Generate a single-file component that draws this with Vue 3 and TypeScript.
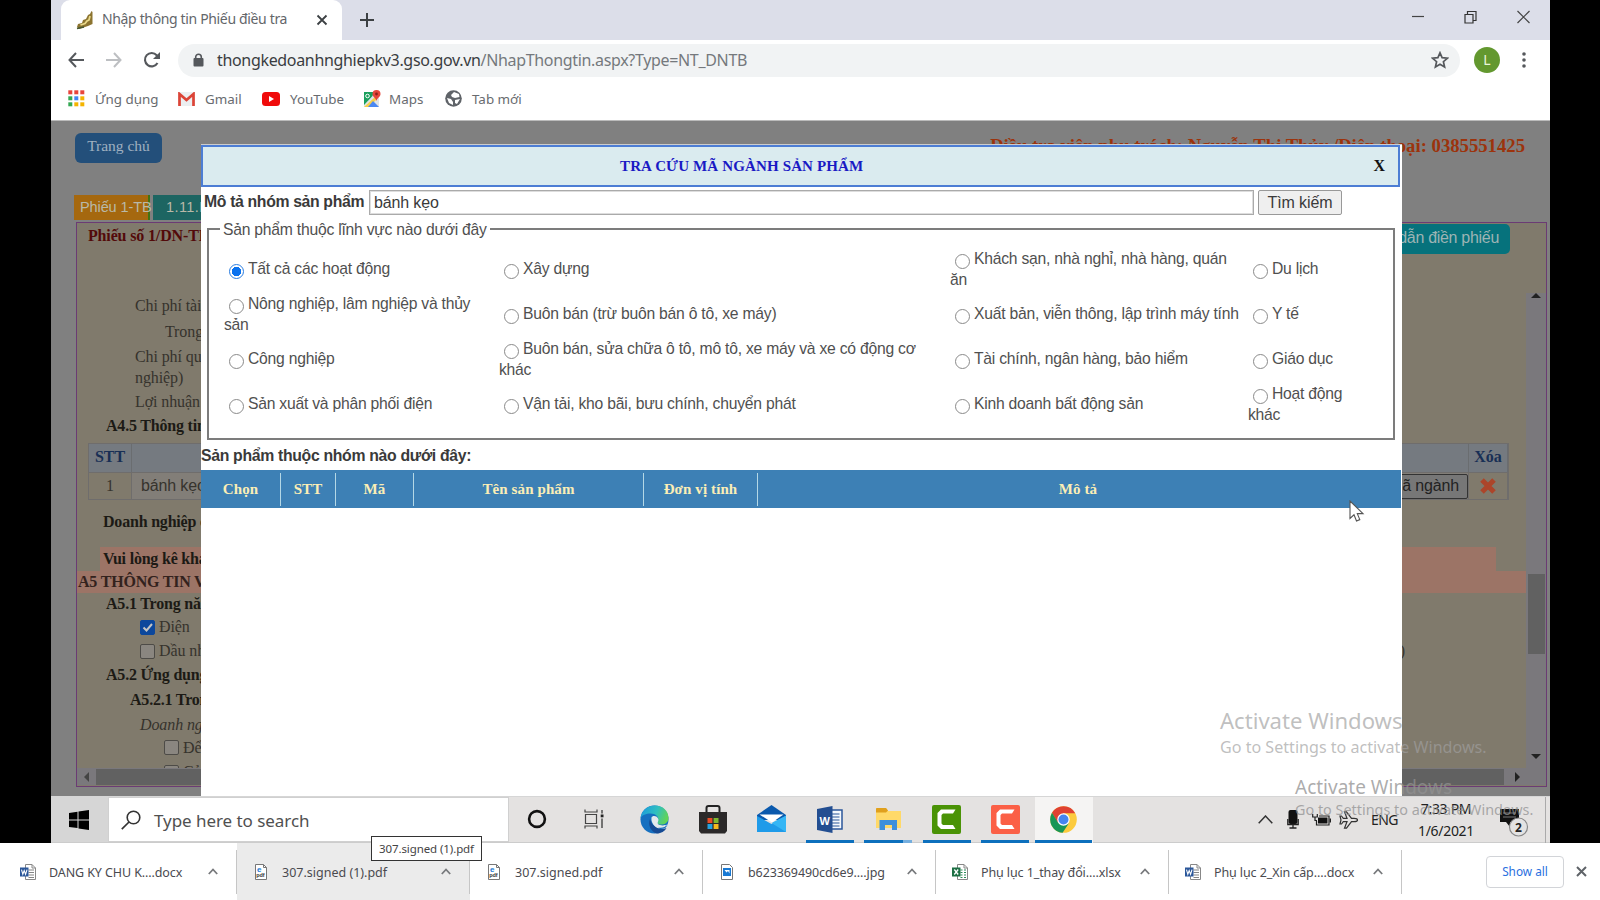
<script setup lang="ts">
interface Bookmark { label: string; icon: string; cls: string }
interface Download { name: string; kind: 'word' | 'pdf' | 'image' | 'excel'; active?: boolean; cls: string }
interface Option { lines: string[]; checked?: boolean }

const bookmarks: Bookmark[] = [
  { label: 'Ứng dụng', icon: 'apps', cls: 'bm-apps' },
  { label: 'Gmail', icon: 'gmail', cls: 'bm-gmail' },
  { label: 'YouTube', icon: 'youtube', cls: 'bm-youtube' },
  { label: 'Maps', icon: 'maps', cls: 'bm-maps' },
  { label: 'Tab mới', icon: 'globe', cls: 'bm-new' },
]

const appDots: string[] = ['#e8453c', '#e8453c', '#e8453c', '#34a853', '#4285f4', '#f4b400', '#34a853', '#f4b400', '#f4b400']

const options: Option[] = [
  { lines: ['Tất cả các hoạt động'], checked: true },
  { lines: ['Xây dựng'] },
  { lines: ['Khách sạn, nhà nghỉ, nhà hàng, quán', 'ăn'] },
  { lines: ['Du lịch'] },
  { lines: ['Nông nghiệp, lâm nghiệp và thủy', 'sản'] },
  { lines: ['Buôn bán (trừ buôn bán ô tô, xe máy)'] },
  { lines: ['Xuất bản, viễn thông, lập trình máy tính'] },
  { lines: ['Y tế'] },
  { lines: ['Công nghiệp'] },
  { lines: ['Buôn bán, sửa chữa ô tô, mô tô, xe máy và xe có động cơ', 'khác'] },
  { lines: ['Tài chính, ngân hàng, bảo hiểm'] },
  { lines: ['Giáo dục'] },
  { lines: ['Sản xuất và phân phối điện'] },
  { lines: ['Vận tải, kho bãi, bưu chính, chuyển phát'] },
  { lines: ['Kinh doanh bất động sản'] },
  { lines: ['Hoạt động', 'khác'] },
]

const columns: string[] = ['Chọn', 'STT', 'Mã', 'Tên sản phẩm', 'Đơn vị tính', 'Mô tả']

const downloads: Download[] = [
  { name: 'DANG KY CHU K....docx', kind: 'word', cls: 'd0' },
  { name: '307.signed (1).pdf', kind: 'pdf', active: true, cls: 'd1' },
  { name: '307.signed.pdf', kind: 'pdf', cls: 'd2' },
  { name: 'b623369490cd6e9....jpg', kind: 'image', cls: 'd3' },
  { name: 'Phụ lục 1_thay đổi....xlsx', kind: 'excel', cls: 'd4' },
  { name: 'Phụ lục 2_Xin cấp....docx', kind: 'word', cls: 'd5' },
]
</script>

<template>
  <div class="desktop">
    <div class="screen">
      <div class="tabstrip">
        <div class="tab">
          <svg class="fav" width="18" height="20" viewBox="0 0 18 20"><path d="M1 17 2 14 6 13 7 10 10 9 12 5 14 4 15.500 1 16.500 2 16.500 14 12 16 3 19Z" fill="#8c7430" /><path d="M4.500 15 9 13.500 11 11 13 10 14 6" stroke="#e9d98a" stroke-width="1.800" fill="none" /><path d="M1 18.500 8 17" stroke="#46562f" stroke-width="1.500" /></svg>
          <span class="tab-title">Nhập thông tin Phiếu điều tra</span>
          <svg width="12" height="12" viewBox="0 0 12 12"><path d="M1.500 1.500 10.500 10.500M10.500 1.500 1.500 10.500" stroke="#3c4043" stroke-width="1.800" /></svg>
        </div>
        <svg class="plus" width="14" height="14" viewBox="0 0 14 14"><path d="M7 0V14M0 7H14" stroke="#3c4043" stroke-width="2" /></svg>
        <div class="winctl">
          <svg width="12" height="14" viewBox="0 0 12 14"><path d="M0 6.500H12" stroke="#444" stroke-width="1.200" /></svg>
          <svg width="13" height="14" viewBox="0 0 13 14"><path d="M1 4.500H9V13H1ZM3.500 4.500V1.500H12V10.500H9" stroke="#333" fill="none" stroke-width="1.200" /></svg>
          <svg width="13" height="14" viewBox="0 0 13 14"><path d="M.5 1 12.500 13M12.500 1 .5 13" stroke="#444" stroke-width="1.200" /></svg>
        </div>
      </div>

      <div class="toolbar">
        <svg class="t-back" width="16" height="16" viewBox="0 0 16 16"><path d="M8 1 1.500 8 8 15M1.500 8H16" stroke="#55585c" fill="none" stroke-width="2" /></svg>
        <svg class="t-fwd" width="16" height="16" viewBox="0 0 16 16"><path d="M8 1 14.500 8 8 15M14.500 8H0" stroke="#bdbfc2" fill="none" stroke-width="2" /></svg>
        <svg class="t-reload" width="18" height="18" viewBox="0 0 18 18"><path d="M14.500 12A6.700 6.700 0 1 1 13.700 4.200L15.500 6" stroke="#55585c" fill="none" stroke-width="2.100" /><path d="M17 1V8H10Z" fill="#55585c" /></svg>
        <div class="omnibox">
          <svg width="11" height="14" viewBox="0 0 11 14"><path d="M2.700 6V4A2.800 2.800 0 0 1 8.300 4V6" stroke="#55585c" fill="none" stroke-width="1.600" /><rect x=".5" y="5" width="10" height="8.500" rx="1" fill="#55585c" /></svg>
          <span class="url"><b>thongkedoanhnghiepkv3.gso.gov.vn</b>/NhapThongtin.aspx?Type=NT_DNTB</span>
          <svg class="star" width="18" height="18" viewBox="0 0 18 18"><path d="M9 1.800 11.100 6.700 16.400 7.200 12.400 10.700 13.600 16 9 13.200 4.400 16 5.600 10.700 1.600 7.200 6.900 6.700Z" stroke="#55585c" fill="none" stroke-width="1.700" /></svg>
        </div>
        <span class="avatar">L</span>
        <svg class="dots" width="4" height="16" viewBox="0 0 4 16"><circle cx="2" cy="2" r="1.800" /><circle cx="2" cy="8" r="1.800" /><circle cx="2" cy="14" r="1.800" /></svg>
      </div>

      <div class="bookmarks">
        <div v-for="b in bookmarks" :key="b.label" class="bm" :class="b.cls">
          <svg v-if="b.icon === 'apps'" width="17" height="17" viewBox="0 0 17 17"><rect v-for="(c, i) in appDots" :key="i" :x="(i % 3) * 6 + 0.3" :y="Math.floor(i / 3) * 6 + 0.3" width="4" height="4" :fill="c" /></svg>
          <svg v-else-if="b.icon === 'gmail'" width="17" height="14" viewBox="0 0 17 14"><rect width="17" height="14" rx="1.500" fill="#eceff1" /><path d="M1.500 14V2L8.500 8 15.500 2V14" stroke="#dc4437" fill="none" stroke-width="2.700" /></svg>
          <svg v-else-if="b.icon === 'youtube'" width="18" height="14" viewBox="0 0 18 14"><rect width="18" height="14" rx="3.500" fill="#f00b0b" /><path d="M7 4 12 7 7 10Z" fill="#fff" /></svg>
          <svg v-else-if="b.icon === 'maps'" width="18" height="18" viewBox="0 0 18 18"><path d="M1 2H11L16 8V17H1Z" fill="#dfe3e6" /><path d="M1 2H11L9.500 6 1 15Z" fill="#1a9f5c" /><path d="M1 17 12 7 14 9 6 17Z" fill="#f8cf46" /><path d="M5 17 10 11 16 17Z" fill="#4b88f2" /><path d="M13.500 0A4 4 0 0 1 17.500 4C17.500 7 14 8 13.500 11 13 8 9.500 7 9.500 4A4 4 0 0 1 13.500 0Z" fill="#e5453a" /><circle cx="13.500" cy="4" r="1.400" fill="#8c2119" /><circle cx="4.500" cy="6" r="1.800" stroke="#fff" fill="none" /></svg>
          <svg v-else width="17" height="17" viewBox="0 0 17 17"><circle cx="8.500" cy="8.500" r="8.300" fill="#5f6368" /><path d="M2 8 6 9 8 12 8 15 4 13ZM9 2 14 4 14.500 7 10 8 7 7 6 5ZM10 10 15 9 12 14 10 13Z" fill="#fff" /></svg>
          <span>{{ b.label }}</span>
        </div>
      </div>

      <div class="page">
        <div class="pagehead">
          <span class="home">Trang chủ</span>
          <span class="investigator">Điều tra viên phụ trách: Nguyễn Thị Thủy /Điện thoại: 0385551425</span>
        </div>
        <div class="formtabs"><span class="ft1">Phiếu 1-TB</span><span class="ft2">1.11.N</span></div>
        <div class="form">
          <div class="formtop"><span class="formname">Phiếu số 1/DN-TB</span><span class="guide">Hướng dẫn điền phiếu</span></div>
          <div class="pane">
            <div class="content">
              <p class="h26 in2">Chi phí tài chính</p>
              <p class="h26 in3">Trong đó</p>
              <p class="h23 in2">Chi phí quản lý</p>
              <p class="h20 in2">nghiệp)</p>
              <p class="h27 in2">Lợi nhuận</p>
              <p class="h21 in1 strong">A4.5 Thông tin</p>
              <div class="grid">
                <span class="gh">STT</span><span class="gh"></span><span class="gh">Xóa</span>
                <span class="gc">1</span>
                <span class="gc prod"><i>bánh kẹo</i><em>Mã ngành</em></span>
                <span class="gc"><svg width="18" height="18" viewBox="0 0 18 18"><path d="M3 3 15 15M15 3 3 15" stroke="#ac452a" stroke-width="5" /></svg></span>
              </div>
              <p class="h44 in0 strong">Doanh nghiệp có</p>
              <p class="band1 strong">Vui lòng kê khai</p>
              <p class="band2 strong">A5 THÔNG TIN VỀ</p>
              <p class="h22 in1 strong">A5.1 Trong năm</p>
              <p class="h24 in4"><span class="cb on"><svg width="13" height="13" viewBox="0 0 13 13"><path d="M2.500 6.500 5.500 9.500 11 3" stroke="#c4c4c4" stroke-width="2" fill="none" /></svg></span>Điện</p>
              <p class="h24 in4"><span class="cb"></span>Dầu nhờn<span class="paren">)</span></p>
              <p class="h24 in1 strong">A5.2 Ứng dụng</p>
              <p class="h25 in5 strong">A5.2.1 Trong</p>
              <p class="h25 in4 ital">Doanh nghiệp</p>
              <p class="h21 in6"><span class="cb"></span>Để</p>
              <p class="h28 in6"><span class="cb"></span>Cả</p>
            </div>
            <div class="vbar"><i class="up"></i><b></b><i class="down"></i></div>
          </div>
          <div class="hbar"><i class="left"></i><b></b><i class="right"></i></div>
        </div>

        <div class="modal">
          <div class="mhead"><span class="mtitle">TRA CỨU MÃ NGÀNH SẢN PHẨM</span><span class="mclose">X</span></div>
          <div class="search"><span class="slabel">Mô tả nhóm sản phẩm</span><span class="sinput">bánh kẹo</span><span class="sbtn">Tìm kiếm</span></div>
          <fieldset>
            <legend>Sản phẩm thuộc lĩnh vực nào dưới đây</legend>
            <div class="opts">
              <div v-for="(o, i) in options" :key="i" class="opt">
                <div class="first"><span class="radio" :class="{ checked: o.checked }"></span><span>{{ o.lines[0] }}</span></div>
                <div v-if="o.lines[1]" class="second">{{ o.lines[1] }}</div>
              </div>
            </div>
          </fieldset>
          <div class="group">Sản phẩm thuộc nhóm nào dưới đây:</div>
          <div class="thead"><span v-for="c in columns" :key="c">{{ c }}</span></div>
        </div>
      </div>

      <div class="taskbar">
        <div class="start"><svg width="20" height="20" viewBox="0 0 20 20"><path d="M0 3 8.500 1.800V9.400H0ZM9.500 1.600 20 0V9.400H9.500ZM0 10.400H8.500V18L0 16.900ZM9.500 10.400H20V20L9.500 18.400Z" /></svg></div>
        <div class="find"><svg width="20" height="20" viewBox="0 0 20 20"><circle cx="12.500" cy="7.500" r="6.300" stroke="#333" fill="none" stroke-width="1.600" /><path d="M8 12 .8 19.200" stroke="#333" stroke-width="1.700" /></svg><span>Type here to search</span></div>
        <div class="apps">
          <div class="app"><svg width="20" height="20" viewBox="0 0 20 20"><circle cx="10" cy="10" r="7.900" stroke="#111" stroke-width="2.600" fill="none" /></svg></div>
          <div class="app taskview"><svg width="20" height="20" viewBox="0 0 20 20"><path d="M1 .5V3H13V.5M1 19.500V17H13V19.500M1.500 5.500H12.500V14.500H1.500Z" stroke="#444" stroke-width="1.200" fill="none" /><path d="M18 1V4.500M18 9.500V19" stroke="#444" stroke-width="1.400" /><rect x="16.700" y="5.500" width="2.800" height="2.800" fill="#222" /></svg></div>
          <div class="app"><svg width="29" height="29" viewBox="0 0 29 29"><defs><linearGradient id="eg" x1="0" x2="1" y1=".2" y2=".5"><stop offset="0" stop-color="#1c9bdd" /><stop offset=".55" stop-color="#30bfc0" /><stop offset="1" stop-color="#62d455" /></linearGradient></defs><circle cx="14.500" cy="14.500" r="14" fill="#1670c0" /><path d="M.6 13C1.500 5 8 .5 15 .5 23 .5 28.500 6 28.500 13 28.500 18 24 20 20 19.500 17 19 17 17.500 18 16 19.500 12 15.500 8.500 10.500 8.500 6 8.500 2 10 .6 13Z" fill="url(#eg)" /><path d="M13 14C12 20 16 24 21 24 24 24 26 23 28 20.500L29 23 27 27 20 24.500Z" fill="#e4e2e1" /><path d="M11.500 12.500C11 17 13 20.500 18 22.500 22 23.500 25 22 28 19.500 25 20.500 20 21 18 19 17 17.500 18.500 16.500 18.500 14.500 17.500 10.500 12.500 10 11.500 12.500Z" fill="#e4e9ec" /><path d="M10 14C7.500 20 11 27 17 28.500 21 28.500 25 26 26.500 23 20 26 12 22 10 14Z" fill="#164b94" /></svg></div>
          <div class="app"><svg width="28" height="29" viewBox="0 0 28 29"><path d="M7.500 8V3A2 2 0 0 1 9.500 1H18.500A2 2 0 0 1 20.500 3V8" stroke="#222" stroke-width="2" fill="none" /><path d="M0 7H28V26L26 28.500H2L0 26Z" fill="#2b2929" /><path d="M8.500 13H13.400V18H8.500Z" fill="#e94d26" /><path d="M14.600 13H19.500V18H14.600Z" fill="#7cb82f" /><path d="M8.500 19H13.400V24H8.500Z" fill="#25a3e0" /><path d="M14.600 19H19.500V24H14.600Z" fill="#f5b91e" /></svg></div>
          <div class="app"><svg width="29" height="28" viewBox="0 0 29 28"><path d="M0 10 14.500 0 29 10V15H0Z" fill="#0a59ad" /><path d="M0 11 14.500 19 29 11V27H0Z" fill="#1f9be9" /><path d="M14.500 18 29 10.500V27Z" fill="#35b6f5" /><path d="M2.500 9.500H26.500L15 17.500Z" fill="#fff" /></svg></div>
          <div class="app run"><svg width="26" height="27" viewBox="0 0 26 27"><path d="M14 4H25V23H14" fill="#f5f8fc" stroke="#2b579a" stroke-width="1.500" /><path d="M15 8H22.500M15 11H22.500M15 14H22.500M15 17H22.500M15 20H22.500" stroke="#2b579a" stroke-width="1.200" /><path d="M0 3 15.500 0V27L0 24Z" fill="#234e91" /><text x="7.800" y="18.500" text-anchor="middle" class="wglyph">W</text></svg></div>
          <div class="app run split"><svg width="27" height="24" viewBox="0 0 27 24"><path d="M1 1H11L13 4H26V21H1Z" fill="#ffd969" /><path d="M1 2Q1 1 2 1H11L13 3.500 11 5.500H1Z" fill="#e0a01d" /><path d="M4.500 23V13H22V23H17V18H10V23Z" fill="#3d8fdb" /></svg></div>
          <div class="app run"><svg width="29" height="29" viewBox="0 0 29 29"><rect width="29" height="29" rx="2" fill="#4a9306" /><path d="M23.500 4.500H9L5.500 8V20.500L9 24H23.500L21 20H11L9.500 18.500V10L11 8.500H21Z" fill="#fff" /></svg></div>
          <div class="app run"><svg width="29" height="29" viewBox="0 0 29 29"><rect width="29" height="29" rx="2" fill="#fb6046" /><path d="M23.500 4.500H9L5.500 8V20.500L9 24H23.500L21 20H11L9.500 18.500V10L11 8.500H21Z" fill="#fff" /></svg></div>
          <div class="app run current"><svg width="27" height="27" viewBox="0 0 27 27"><circle cx="13.500" cy="13.500" r="13.300" fill="#fccb3e" /><path d="M2 6.800A13.300 13.300 0 0 1 25.200 7.300H13.500L7.800 17Z" fill="#df4132" /><path d="M2 6.800 8 16.600 18.700 17.500 12.600 26.800A13.300 13.300 0 0 1 2 6.800Z" fill="#189657" /><circle cx="13.500" cy="13.500" r="6.200" fill="#fff" /><circle cx="13.500" cy="13.500" r="5" fill="#4585ef" /></svg></div>
        </div>
        <div class="tray">
          <svg class="tr-chev" width="15" height="9" viewBox="0 0 15 9"><path d="M.7 8.300 7.500 1 14.300 8.300" stroke="#333" stroke-width="1.500" fill="none" /></svg>
          <svg class="tr-mic" width="12" height="19" viewBox="0 0 12 19"><rect x="1.500" width="9" height="14" rx="2" fill="#111" /><path d="M.8 9V14.500H11.200V9M6 14V18M2.500 18H9.500" stroke="#222" stroke-width="1.300" fill="none" /></svg>
          <svg class="tr-bat" width="19" height="13" viewBox="0 0 19 13"><path d="M.7 1V4H5.300V1M3 4V7.500H5M7 3H17V12H4.500V8" stroke="#222" stroke-width="1.200" fill="none" /><rect x="6" y="4.500" width="9.500" height="6" fill="#111" /><path d="M18.300 5.500V9.500" stroke="#222" stroke-width="1.400" /></svg>
          <svg class="tr-plane" width="20" height="18" viewBox="0 0 20 18"><path d="M18.500 9C18.500 8 17 7.300 15 7.300H12.500L7.500.8H5.500L8 7.300H4.300L2.500 5H1L2 9 1 13H2.500L4.300 10.700H8L5.500 17.200H7.500L12.500 10.700H15C17 10.700 18.500 10 18.500 9Z" stroke="#333" stroke-width="1.200" fill="none" /></svg>
          <span class="lang">ENG</span>
          <div class="clock"><span>7:33 PM</span><span>1/6/2021</span></div>
          <svg class="note" width="30" height="30" viewBox="0 0 30 30"><path d="M0 1H19V14H10V19L6 14H0Z" fill="#111" /><path d="M3 5H16M3 9H16" stroke="#777" stroke-width="1.200" /><circle cx="18.500" cy="19" r="9" fill="#e3e3e3" stroke="#888" stroke-width="1.200" /><text x="18.500" y="23.500" text-anchor="middle" class="count">2</text></svg>
        </div>
      </div>

      <div class="wm wm1"><b>Activate Windows</b><span>Go to Settings to activate Windows.</span></div>
      <svg class="cursor" width="16" height="23" viewBox="0 0 16 23"><path d="M1 1V18.500L5 14.800 7.500 21 10.800 19.600 8.300 13.600H14Z" fill="#fff" stroke="#555" stroke-width="1.100" /></svg>
    </div>

    <div class="downloads">
      <div v-for="d in downloads" :key="d.name" class="dl" :class="[d.cls, { active: d.active }]">
        <div class="dicon">
          <svg v-if="d.kind === 'word' || d.kind === 'excel'" width="16" height="16" viewBox="0 0 16 16"><path d="M5.500.5H12L15.500 4V15.500H5.500Z" fill="#fff" stroke="#888" /><path d="M12 .5V4H15.500" stroke="#888" fill="none" /><path v-if="d.kind === 'word'" d="M8.500 6H14M8.500 8.500H14M8.500 11H14M8.500 13.500H14" stroke="#777" stroke-width=".9" /><path v-else d="M8.500 6H10.500M12 6H14M8.500 8.500H10.500M12 8.500H14M8.500 11H10.500M12 11H14M8.500 13.500H10.500M12 13.500H14" stroke="#2b8a57" /><rect y="3.500" width="8.500" height="9" :fill="d.kind === 'word' ? '#2b579a' : '#1d7044'" /><path v-if="d.kind === 'word'" d="M1.500 5.700 2.800 10.300 4.200 6.500 5.600 10.300 7 5.700" stroke="#fff" stroke-width="1.100" fill="none" /><path v-else d="M2.300 5.500 6.200 10.500M6.200 5.500 2.300 10.500" stroke="#fff" stroke-width="1.300" /></svg>
          <svg v-else-if="d.kind === 'pdf'" width="12" height="16" viewBox="0 0 12 16"><path d="M.5.5H8.500L11.500 3.500V15.500H.5Z" fill="#fff" stroke="#777" /><path d="M8.500.5V3.500H11.500" stroke="#777" fill="none" /><text x="2" y="7.500" class="eglyph">e</text><text x="1.300" y="13.300" class="pglyph">pdf</text></svg>
          <svg v-else width="12" height="16" viewBox="0 0 12 16"><path d="M.5.5H8.500L11.500 3.500V15.500H.5Z" fill="#fff" stroke="#777" /><rect x="2" y="4" width="8" height="8" fill="#1979d3" /><path d="M3.500 6 5.500 8.500 7 7 8.500 9.500V6Z" fill="#fff" /></svg>
        </div>
        <span class="dname">{{ d.name }}</span>
        <svg class="dchev" width="10" height="7" viewBox="0 0 10 7"><path d="M.8 6 5 1.500 9.200 6" stroke="#77797c" stroke-width="1.800" fill="none" /></svg>
      </div>
      <span class="showall">Show all</span>
      <svg class="dclose" width="11" height="11" viewBox="0 0 11 11"><path d="M1 1 10 10M10 1 1 10" stroke="#5f6368" stroke-width="2" /></svg>
    </div>
    <div class="tip">307.signed (1).pdf</div>
    <div class="wm wm2"><b>Activate Windows</b><span>Go to Settings to activate Windows.</span></div>
  </div>
</template>

<style>
body { margin: 0; background: #000; }
</style>

<style scoped>
.desktop { position: relative; width: 1600px; height: 900px; overflow: hidden; background: #000; font-family: "Noto Sans", "Open Sans", sans-serif; box-sizing: border-box; }
.desktop * { box-sizing: border-box; }
svg { display: block; flex: none; }
p { margin: 0; }
span, p, legend, b, i, em { white-space: nowrap; }
.screen { position: relative; margin-left: 51px; width: 1499px; height: 843px; background: #fff; }

.tabstrip { height: 40px; background: #dcdee9; display: flex; align-items: center; padding-left: 10px; }
.tab { width: 281px; height: 40px; background: #fff; border-radius: 9px 9px 0 0; display: flex; align-items: center; padding: 0 14px 0 15px; }
.fav { margin-right: 8px; }
.tab-title { font-size: 14px; color: #63666a; letter-spacing: -0.35px; width: 214px; line-height: 18px; margin-top: -2px; }
.plus { margin-left: 18px; }
.winctl { margin-left: auto; display: flex; gap: 40px; padding-right: 20px; margin-top: -6px; }

.toolbar { height: 42px; display: flex; align-items: center; padding: 0 0 2px 17px; }
.t-fwd { margin-left: 22px; }
.t-reload { margin-left: 21px; }
.omnibox { margin-left: 17px; width: 1282px; height: 33px; border-radius: 17px; background: #f1f3f4; display: flex; align-items: center; padding: 0 11px 0 15px; }
.url { margin-left: 13px; font-size: 16px; color: #75797d; letter-spacing: -0.33px; }
.url b { font-weight: 400; color: #3a3d41; }
.star { margin-left: auto; }
.avatar { margin-left: 14px; width: 26px; height: 26px; border-radius: 50%; background: #63982f; color: #e9f5d9; font-size: 14px; line-height: 26px; text-align: center; }
.dots { margin-left: 22px; fill: #55585c; }
.bookmarks { height: 39px; display: flex; align-items: center; padding: 0 0 5px 17px; font-size: 13.4px; color: #686b6f; border-bottom: 1px solid #bbb; }
.bm { display: flex; align-items: center; }
.bm span { margin-left: 10px; }
.bm-apps { width: 110px; }
.bm-gmail { width: 84px; }
.bm-youtube { width: 101px; }
.bm-maps { width: 82px; }
.bm-maps span { margin-left: 8px; }

.page { position: relative; height: 675px; background: #808080; font-family: "Liberation Serif", serif; font-size: 16px; color: #36332d; }
.pagehead { height: 74px; display: flex; justify-content: space-between; padding: 12px 25px 0 24px; }
.home { width: 87px; height: 30px; border-radius: 6px; background: #234f7a; color: #9fb0c0; text-align: center; line-height: 26px; font-size: 15.5px; }
.investigator { font-size: 18.7px; font-weight: 700; color: #9c330c; line-height: 26px; }
.formtabs { height: 27px; display: flex; gap: 3px; padding-left: 23px; font-family: "Liberation Sans", sans-serif; font-size: 14.5px; letter-spacing: -0.1px; color: #b9b9a8; }
.ft1 { width: 76px; height: 25px; line-height: 25px; background: #a5680f; border-right: 2px solid #417312; padding-left: 6px; }
.ft2 { width: 90px; height: 25px; line-height: 25px; background: #1d6562; padding-left: 13px; letter-spacing: 0.4px; }
.form { margin-left: 25px; width: 1471px; height: 565px; border: 1px solid #6b3b74; background: #807a6c; display: flex; flex-direction: column; overflow: hidden; }
.formtop { height: 70px; display: flex; justify-content: space-between; padding: 1px 36px 0 11px; }
.formname { font-weight: 700; color: #530a0a; line-height: 24px; letter-spacing: -0.15px; }
.guide { height: 30px; padding: 0 11px; background: #06727c; border-radius: 5px; color: #9db4b4; font: 16px/28px "Liberation Sans", sans-serif; letter-spacing: -0.3px; }
.pane { height: 475px; display: flex; overflow: hidden; }
.content { width: 1449px; overflow: hidden; height: 475px; }
.content p { display: flex; align-items: center; font-size: 16px; letter-spacing: -0.1px; }
.content .strong { font-weight: 700; color: #1c1a15; letter-spacing: -0.2px; }
.content .ital { font-style: italic; }
.h20 { height: 20px; } .h21 { height: 21px; } .h22 { height: 22px; } .h23 { height: 23px; } .h24 { height: 24px; }
.h25 { height: 25px; } .h26 { height: 26px; } .h27 { height: 27px; } .h28 { height: 28px; } .h44 { height: 44px; }
.in0 { padding-left: 26px; } .in1 { padding-left: 29px; } .in2 { padding-left: 58px; } .in3 { padding-left: 88px; }
.in4 { padding-left: 63px; } .in5 { padding-left: 53px; } .in6 { padding-left: 87px; }
.cb { width: 15px; height: 15px; border: 1px solid #4d4b47; border-radius: 2px; background: #8a8680; margin-right: 4px; }
.cb.on { background: #0c479c; border-color: #0c479c; }
.paren { margin-left: auto; padding-right: 121px; }
.grid { margin: 7px 0 0 11px; width: 1421px; height: 57px; display: grid; grid-template: 28px 27px / 43px 1337px 39px; border: 1px solid #6f6d6c; }
.gh { background: #757a80; color: #182f55; font-weight: 700; display: flex; align-items: center; justify-content: center; border-right: 1px solid #6a6d70; padding-bottom: 2px; }
.gc { display: flex; align-items: center; justify-content: center; border-top: 1px solid #6f6d6c; border-right: 1px solid #6f6d6c; }
.prod { justify-content: space-between; padding-left: 9px; font-family: "Liberation Sans", sans-serif; background: #827e78; letter-spacing: -0.15px; }
.prod i, .prod em { font-style: normal; }
.prod em { height: 25px; line-height: 22px; border: 1px solid #333; border-radius: 2px; padding: 0 8px; background: #777; color: #222; }
.content .band1 { margin: 3px 0 0 23px; width: 1396px; height: 24px; background: #9c7466; padding-left: 3px; }
.content .band2 { height: 22px; background: #9c7466; padding-left: 1px; color: #33221d; }
.vbar { width: 20px; background: #7a787c; display: flex; flex-direction: column; align-items: center; }
.vbar b { width: 17px; height: 80px; background: #616161; margin-top: 276px; }
.up { margin-top: 0; border: 5px solid transparent; border-top: 0; border-bottom-color: #222; }
.down { margin-top: auto; margin-bottom: 9px; border: 5px solid transparent; border-bottom: 0; border-top-color: #222; }
.hbar { height: 17px; background: #7a787c; display: flex; align-items: center; }
.left { margin-left: 7px; border: 5px solid transparent; border-left: 0; border-right-color: #444; }
.hbar b { margin-left: 7px; width: 1408px; height: 16px; background: #616161; }
.right { margin-left: 11px; border: 5px solid transparent; border-right: 0; border-left-color: #222; }

.modal { position: absolute; left: 150px; top: 23px; width: 1201px; height: 652px; background: #fff; border-top: 1px solid #ccc; font-family: "Liberation Sans", sans-serif; color: #505050; }
.mhead { width: 1199px; height: 42px; background: #daebef; border: 2px solid #4c7dd4; display: flex; align-items: center; font-family: "Liberation Serif", serif; font-weight: 700; }
.mtitle { margin-left: 417px; color: #1a1ac4; font-size: 15px; letter-spacing: 0.14px; }
.mclose { margin-left: auto; margin-right: 13px; color: #111; font-size: 16px; }
.search { height: 31px; display: flex; padding: 3px 0 0 3px; color: #3a3a3a; font-size: 16px; }
.slabel { width: 165px; font-weight: 700; line-height: 24px; font-size: 15.8px; letter-spacing: -0.35px; }
.sinput { width: 885px; height: 25px; border: 1px solid #aaa; outline: 1px solid #ddd; outline-offset: -2px; line-height: 23px; padding-left: 4px; letter-spacing: -0.15px; }
.sbtn { margin-left: 4px; width: 84px; height: 25px; border: 1px solid #999; border-radius: 2px; background: #efefef; line-height: 23px; text-align: center; letter-spacing: -0.1px; }
fieldset { position: relative; margin: 0 0 0 6px; padding: 0; width: 1186px; height: 222px; border: 2px solid #7c7c7c; font-size: 15.7px; letter-spacing: -0.23px; }
legend { margin-left: 11px; padding: 0 3px; height: 22px; line-height: 23px; }
.opts { display: grid; grid-template-columns: 275px 451px 298px 145px; grid-auto-rows: 45px; padding: 6px 0 0 15px; }
.opt { display: flex; flex-direction: column; justify-content: center; line-height: 21px; }
.first { display: flex; padding-left: 5px; gap: 4px; }
.radio { width: 15px; height: 15px; border: 1px solid #8a8a8a; border-radius: 50%; margin-top: 6px; flex: none; }
.radio.checked { border-color: #2a7de0; background: radial-gradient(circle, #0a72ef 0 4.5px, #fff 5px); }
.group { height: 30px; line-height: 31px; font-weight: 700; color: #3a3a3a; font-size: 15.8px; letter-spacing: -0.32px; }
.thead { width: 1200px; height: 38px; background: #3d80b5; display: grid; grid-template-columns: 80px 55px 78px 230px 114px 640px; padding: 3px 0; font: 700 15px/33px "Liberation Serif", serif; color: #fbeeb6; text-align: center; letter-spacing: 0.1px; }
.thead span { border-right: 1px solid #b4d8e6; }
.thead span:last-child { border: 0; }

.taskbar { height: 47px; background: #e4e2e1; display: flex; align-items: center; border-bottom: 1px solid #ccc; border-top: 1px solid #d6d6d6; }
.start { width: 57px; height: 45px; background: #d6d6d6; display: flex; align-items: center; justify-content: center; padding-right: 1px; }
.find { width: 401px; height: 45px; background: #fff; border: 1px solid #d0d0d0; display: flex; align-items: center; padding-left: 12px; color: #505050; font-size: 17px; letter-spacing: -0.05px; }
.find span { margin-left: 13px; margin-top: 2px; }
.apps { display: flex; height: 46px; margin-left: -1px; }
.app { width: 58.5px; height: 46px; display: flex; align-items: center; justify-content: center; padding-bottom: 1px; }
.taskview { padding-right: 4px; }
.run { background: linear-gradient(#0d70bd, #0d70bd) center bottom / 48px 3px no-repeat; }
.split { background: linear-gradient(90deg, #0d70bd 82%, #75aede 82%) center bottom / 48px 3px no-repeat; }
.current { background: linear-gradient(#0d70bd, #0d70bd) center bottom / 57px 3px no-repeat #f5f4f3; }
.wglyph { font: 700 11px "Liberation Sans", sans-serif; fill: #fff; }
.tray { margin-left: auto; display: flex; align-items: center; height: 46px; border-right: 1px solid #aaa; margin-right: 4px; color: #222; font-size: 14px; }
.tr-mic { margin-left: 14px; } .tr-bat { margin-left: 13px; } .tr-plane { margin-left: 8px; }
.lang { margin-left: 12px; width: 27px; letter-spacing: -0.6px; }
.clock { width: 96px; display: flex; flex-direction: column; align-items: center; line-height: 22px; letter-spacing: -0.3px; }
.note { margin-left: 6px; margin-right: 15px; margin-top: 6px; }
.count { font: 700 12px "Noto Sans", sans-serif; fill: #222; }
.cursor { position: absolute; left: 1298px; top: 500px; }

.wm { position: absolute; display: flex; flex-direction: column; color: rgba(160, 160, 160, .68); }
.wm b { font-weight: 400; }
.wm1 { left: 1169px; top: 705px; }
.wm1 b { font-size: 22.1px; line-height: 30px; }
.wm1 span { font-size: 16.1px; line-height: 25px; }
.wm2 { left: 1295px; top: 774px; color: rgba(145, 145, 145, .75); }
.wm2 b { font-size: 19px; line-height: 27px; }
.wm2 span { font-size: 14.400px; line-height: 18px; }

.downloads { height: 57px; background: #fff; display: flex; align-items: center; }
.dl { position: relative; width: 233px; height: 57px; display: flex; align-items: center; padding-left: 20px; font-size: 12.5px; letter-spacing: -0.1px; color: #4a4a4f; background: linear-gradient(#c6c6c6, #c6c6c6) right 7px / 1px 44px no-repeat; }
.dname { margin-top: 2px; }
.d1 .dname, .d2 .dname { letter-spacing: 0; }
.d1, .d2, .d3, .d4, .d5 { padding-left: 16px; }
.d0 { width: 237px; }
.dl.active { background-color: #ebebeb; }
.dicon { width: 16px; display: flex; justify-content: center; margin-right: 13px; }
.dchev { margin-left: auto; margin-right: 19px; }
.eglyph { font: 700 8px "Liberation Sans", sans-serif; fill: #1979d3; }
.pglyph { font: 700 5.500px "Liberation Sans", sans-serif; fill: #333; }
.showall { margin-left: 84px; width: 78px; height: 32px; border: 1px solid #d2d4d8; border-radius: 4px; color: #2a6fe0; font-size: 11.8px; line-height: 29px; text-align: center; }
.dclose { margin-left: 12px; }
.tip { position: absolute; left: 371px; top: 836px; width: 111px; height: 25px; border: 1px solid #333; background: #fff; font-size: 11.500px; line-height: 23px; text-align: center; color: #444; letter-spacing: -0.1px; }
</style>
